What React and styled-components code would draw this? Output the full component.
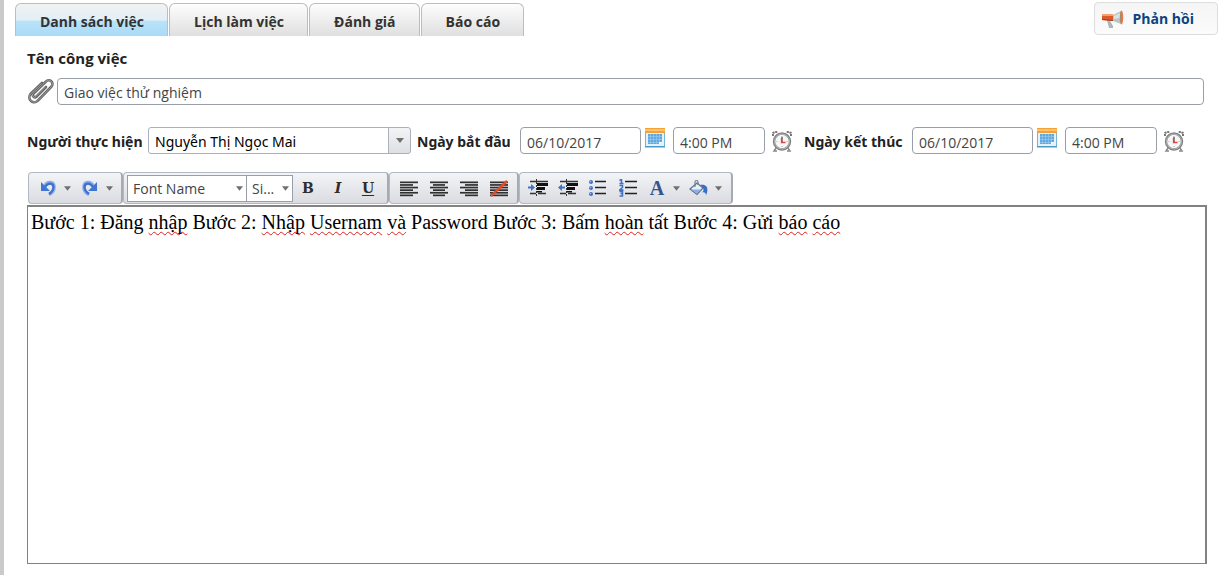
import React from "react";
import styled, { createGlobalStyle, css } from "styled-components";

const ui = `"Open Sans", "Noto Sans", sans-serif`;

const GlobalStyle = createGlobalStyle`
  *, *::before, *::after { box-sizing: border-box; }
  body { margin: 0; background: #fff; font-family: ${ui}; font-size: 14px; color: #222; }
  button, input, select { font: inherit; color: inherit; margin: 0; }
`;

const Page = styled.div`
  display: flex;
  flex-direction: column;
  min-height: 100vh;
  padding: 2px 11px 11px;
  border-left: 4px solid #cbcaca;
`;

const Header = styled.header`
  display: flex;
  justify-content: space-between;
  align-items: flex-start;
`;

const TabBar = styled.nav`
  display: flex;
  gap: 1px;
  padding-top: 1px;
`;

const Tab = styled.button`
  height: 33px;
  padding: 3px 23px 0 24px;
  border: 1px solid #bdbdbd;
  border-bottom: 0;
  border-radius: 6px 6px 0 0;
  font-weight: 700;
  line-height: 20px;
  color: #333;
  white-space: nowrap;
  background: ${(p) =>
    p.$active
      ? "linear-gradient(#f1f2f3 0%, #e2eff5 50%, #b9e3fa 54%, #a9daf7 100%)"
      : "linear-gradient(#fdfdfd, #dfdfdf)"};
`;

const Feedback = styled.button`
  display: flex;
  align-items: center;
  gap: 9px;
  height: 33px;
  padding: 0 23px 0 7px;
  border: 1px solid #ddd;
  border-radius: 4px;
  background: linear-gradient(#f5f5f5, #fbfbfb);
  color: #0b4382;
  font-weight: 700;
  line-height: 20px;
`;

const Form = styled.main`
  flex: 1;
  display: flex;
  flex-direction: column;
  padding: 12px 11px 0 12px;
`;

const Title = styled.label`
  font-size: 15px;
  font-weight: 700;
  line-height: 20px;
`;

const Label = styled.label`
  min-width: ${(p) => p.$width};
  padding-top: 2px;
  font-family: "Noto Sans", sans-serif;
  font-weight: 700;
  line-height: 20px;
  white-space: nowrap;
`;

const TextBox = styled.input`
  height: 27px;
  width: ${(p) => p.$width || "100%"};
  padding: 3px 6px 0;
  border: 1px solid #999ea8;
  border-radius: 4px;
  background: #fff;
  color: #444;
`;

const NameRow = styled.div`
  display: flex;
  align-items: center;
  gap: 2px;
  margin-top: 9px;
  padding-right: 3px;
`;

const IconButton = styled.button`
  display: flex;
  flex: none;
  padding: 0;
  border: 0;
  background: none;
`;

const FieldRow = styled.div`
  display: flex;
  align-items: center;
  margin-top: 22px;
  gap: 6px;
`;

const Field = styled.div`
  display: flex;
  align-items: center;
  gap: 4px;
`;

const DateField = styled(Field)`
  padding-right: 5px;
`;

const CalendarButton = styled(IconButton)`
  align-self: flex-start;
  padding-top: 1px;
  margin-right: 4px;
`;

const ClockButton = styled(IconButton)`
  margin-left: 2px;
`;

const SelectWrap = styled.span`
  display: grid;
  grid-template-columns: 1fr ${(p) => (p.$boxed ? "22px" : "16px")};
  align-items: center;
  width: ${(p) => p.$width};
  svg {
    grid-area: 1 / 2;
    justify-self: center;
    pointer-events: none;
  }
`;

const Select = styled.select`
  grid-area: 1 / 1 / 2 / 3;
  height: 27px;
  width: 100%;
  padding: 0 16px 0 5px;
  appearance: none;
  border: 1px solid #999ea8;
  background: #fff;
  color: #444;
  ${(p) =>
    p.$boxed &&
    css`
      padding: 2px 22px 0 6px;
      border-color: #abb0ba;
      border-radius: 3px;
      font-family: "Noto Sans", sans-serif;
      color: #000;
      background: linear-gradient(#abb0ba, #abb0ba) right 21px top / 1px 100% no-repeat,
        linear-gradient(#f3f4f6, #dddfe3) right top / 21px 100% no-repeat, #fff;
    `}
`;

const Toolbar = styled.div`
  display: flex;
  margin: 18px 0 1px 1px;
`;

const Group = styled.div`
  display: flex;
  align-items: center;
  height: 32px;
  padding: 0 ${(p) => p.$end || "4px"} 0 ${(p) => p.$start || "4px"};
  border: 1px solid #b3b9c2;
  border-right: 2px solid #a5abb4;
  border-radius: 4px;
  background: linear-gradient(#f3f4f6, #dadce1);
  ${SelectWrap} + ${SelectWrap} { margin-left: -1px; }
`;

const Tool = styled.button`
  display: flex;
  align-items: center;
  justify-content: center;
  width: ${(p) => (p.$split ? "28px" : "30px")};
  height: 26px;
  padding: 0;
  border: 0;
  background: none;
`;

const ToolArrow = styled(Tool)`
  width: 10px;
  margin-right: 4px;
`;

const Glyph = styled.span`
  font-family: "DejaVu Serif", serif;
  font-size: 14px;
  line-height: 20px;
  font-weight: 700;
  color: #2e2e2e;
  font-style: ${(p) => (p.$italic ? "italic" : "normal")};
  text-decoration: ${(p) => (p.$underline ? "underline" : "none")};
  text-underline-offset: 2px;
`;

const ColorGlyph = styled(Glyph)`
  font-family: "Liberation Serif", serif;
  font-size: 20px;
  color: #31558f;
`;

const Editor = styled.div`
  flex: 1;
  min-height: 120px;
  padding: 4px 3px;
  border: 1px solid #828282;
  border-top-width: 2px;
  border-right-width: 2px;
  outline: 0;
  font-family: "Liberation Serif", serif;
  font-size: 20px;
  line-height: 23px;
  color: #000;
`;

const Misspelled = styled.span`
  text-decoration: underline wavy #e02020 1px;
  text-underline-offset: 2px;
  text-decoration-skip-ink: none;
`;

const Caret = ({ w = 8 }) => (
  <svg width={w} height="5" viewBox="0 0 8 5" aria-hidden="true">
    <path d="M0 0h8L4 5z" fill="#6f6f6f" />
  </svg>
);

const Megaphone = () => (
  <svg width="22" height="18" viewBox="0 0 22 18" aria-hidden="true">
    <path d="M5 10l3 1 3 5v2H7z" fill="#a9b6b9" />
    <path d="M11 5l8-4v13l-8-3z" fill="#b7c3c4" />
    <path d="M12 6l6-3v5l-6 1z" fill="#dbe2e1" />
    <path d="M0 4h11v7L0 10z" fill="#dc5a28" />
    <path d="M0 4h11v2H0z" fill="#f3a071" />
    <path d="M0 9l11 1v1L0 10z" fill="#963d20" />
    <ellipse cx="19.500" cy="7.500" rx="1.700" ry="7" fill="#e77b45" />
    <ellipse cx="19" cy="7.500" rx=".8" ry="5" fill="#8b928f" />
  </svg>
);

const Paperclip = () => (
  <svg width="28" height="28" viewBox="0 0 28 28" fill="none" strokeLinecap="round" aria-hidden="true">
    <path d="M19 10L9.500 19.500a2 2 0 0 1-3-3L19 4.500a3.600 3.600 0 0 1 5.500 5L11 23.500a4.800 4.800 0 0 1-7.500-6.500L15 6" stroke="#656565" strokeWidth="2.600" />
    <path d="M18.500 10L9 19.500a2 2 0 0 1-3-3L19 4.500a3.600 3.600 0 0 1 5.500 5L11 23.500a4.800 4.800 0 0 1-7.500-6.500L14.500 6.500" stroke="#aaa" strokeWidth=".8" />
  </svg>
);

const Calendar = () => (
  <svg width="20" height="20" viewBox="0 0 20 20" aria-hidden="true">
    <rect x=".5" y=".5" width="19" height="18" fill="#e5f2fa" stroke="#77b3d5" />
    <path d="M0 0h20v5H0z" fill="#f4a137" />
    <path d="M0 1h20v2H0z" fill="#ffc26b" />
    <path d="M3 6h14v8h-3v2H3z" fill="#60a8df" />
    <path d="M3 8.500h14M3 11.500h14M3 14.500h11M5.500 6v10M8.500 6v10M11.500 6v10M14.500 6v8" stroke="#9accee" strokeWidth=".6" />
    <path d="M14 14h3l-3 2z" fill="#fff" />
    <path d="M0 18h20v1.500H0z" fill="#4b9ac7" />
  </svg>
);

const Clock = () => (
  <svg width="22" height="22" viewBox="0 0 22 22" fill="none" aria-hidden="true">
    <path d="M2 6V3l2-1h3M20 6V3l-2-1h-3" stroke="#777" strokeWidth="2" strokeDasharray="2 .7" />
    <path d="M5 18l-2 3h3M17 18l2 3h-3M5 5l2 2M17 5l-2 2" stroke="#888" strokeWidth="1.500" />
    <circle cx="11" cy="11.500" r="8" fill="#f7f7f7" stroke="#808080" strokeWidth="2.400" />
    <circle cx="11" cy="11.500" r="7.500" stroke="#c4c4c4" strokeWidth=".8" />
    <path d="M11 7v5" stroke="#666" strokeWidth="1.500" />
    <path d="M10.500 8v4.500h4" stroke="#df4547" strokeWidth="1.300" />
    <path d="M11 6v1M11 16v1M5.500 11.500h1M15.500 11.500h1" stroke="#aaa" />
  </svg>
);

const Undo = ({ flip }) => (
  <svg width="16" height="16" viewBox="0 0 16 16" aria-hidden="true">
    <g transform={flip ? "matrix(-1 0 0 1 16 0)" : undefined}>
      <path d="M5 6c2-5 9-4.500 9 1 0 3.500-1.500 6-5 7.500" fill="none" stroke="#8dadeb" strokeWidth="3.600" />
      <path d="M5 7c3-5 8.500-4 8.500 0 0 3-1.500 5-4.500 7" fill="none" stroke="#3c70cc" strokeWidth="2.200" />
      <path d="M1 2v9h9L7 8 5 6z" fill="#4175d2" />
    </g>
  </svg>
);

const alignRows = {
  left: [[0, 18], [0, 13], [0, 18], [0, 13], [0, 18], [0, 13]],
  center: [[0, 18], [3, 12], [0, 18], [3, 12], [0, 18], [3, 12]],
  right: [[0, 18], [5, 13], [0, 18], [5, 13], [0, 18], [5, 13]],
  none: [[0, 18], [0, 18], [0, 18], [0, 18], [0, 18], [0, 18]],
};

const Align = ({ kind }) => (
  <svg width="18" height="17" viewBox="0 0 18 17" aria-hidden="true">
    {alignRows[kind].map(([x, w], i) => (
      <rect key={i} x={x} y={1.5 + i * 2.6} width={w} height="1.700" fill="#303030" />
    ))}
    {kind === "none" && <path d="M1 16L17 1" stroke="#e34a27" strokeWidth="2.400" />}
  </svg>
);

const Indent = ({ out }) => (
  <svg width="20" height="18" viewBox="0 0 20 18" aria-hidden="true">
    <path d="M2 2.500h18M2 14.500h6M10 14.500h8" stroke="#333" strokeWidth="1.300" />
    <path d="M9 4h11v3H9zM9 8h8v3H9zM9 12h5v1.500H9z" fill="#111" />
    <path d="M8.500 0v18" stroke="#333" strokeDasharray="2 1" />
    <path d={out ? "M0 8.500l4-3.500v2.500h3v2H4V12z" : "M7 8.500L3 5v2.500H0v2h3V12z"} fill="#3f72cb" />
  </svg>
);

const Bullets = () => (
  <svg width="18" height="18" viewBox="0 0 18 18" aria-hidden="true">
    <path d="M6 2.500h11M6 8.500h11M6 14.500h11" stroke="#222" strokeWidth="1.500" />
    {[3, 9, 15].map((y) => (
      <g key={y}>
        <circle cx="2" cy={y} r="2" fill="#426fc0" />
        <circle cx="1.500" cy={y - 0.5} r=".7" fill="#a9c4f2" />
      </g>
    ))}
  </svg>
);

const Numbers = () => (
  <svg width="18" height="18" viewBox="0 0 18 18" fill="none" aria-hidden="true">
    <path d="M6 2.500h12M6 8.500h12M6 14.500h12" stroke="#222" strokeWidth="1.500" />
    <path d="M.5 1.500L2.500.5v4M.5 4.500h4M.5 6.500h3v2l-3 2.500h4M.5 12.500h3v4.500h-3M1.500 14.500h2" stroke="#416fc2" strokeWidth="1.500" />
  </svg>
);

const Bucket = () => (
  <svg width="20" height="18" viewBox="0 0 20 18" fill="none" aria-hidden="true">
    <path d="M8 4l6 5-6 6.500L1 10z" fill="#e8eef6" stroke="#587194" strokeWidth="1.200" />
    <path d="M2.500 10.500h10L8 14.500z" fill="#8bb0e0" />
    <path d="M6 8V3c0-2 3-2 3 0v3" stroke="#747f8c" strokeWidth="1.200" />
    <path d="M11 6c6-1 9.500 2 6 10.500 0-3-2-4-4-3 2.500-2 2-5-2-7.500z" fill="#386fc4" />
  </svg>
);

const SplitTool = ({ label, children }) => (
  <>
    <Tool type="button" $split aria-label={label}>{children}</Tool>
    <ToolArrow type="button" aria-label={`${label} options`}><Caret w={7} /></ToolArrow>
  </>
);

const Schedule = ({ id, label, labelWidth }) => (
  <DateField>
    <Label htmlFor={id} $width={labelWidth}>{label}</Label>
    <TextBox id={id} $width="121px" defaultValue="06/10/2017" />
    <CalendarButton type="button" aria-label="Calendar"><Calendar /></CalendarButton>
    <TextBox $width="92px" defaultValue="4:00 PM" aria-label={`${label} time`} />
    <ClockButton type="button" aria-label="Clock"><Clock /></ClockButton>
  </DateField>
);

const tabs = ["Danh sách việc", "Lịch làm việc", "Đánh giá", "Báo cáo"];

export default function App() {
  return (
    <>
      <GlobalStyle />
      <Page>
        <Header>
          <TabBar>
            {tabs.map((t, i) => (
              <Tab key={t} type="button" $active={i === 0}>{t}</Tab>
            ))}
          </TabBar>
          <Feedback type="button"><Megaphone />Phản hồi</Feedback>
        </Header>
        <Form>
          <Title htmlFor="task">Tên công việc</Title>
          <NameRow>
            <IconButton type="button" aria-label="Attach"><Paperclip /></IconButton>
            <TextBox id="task" defaultValue="Giao việc thử nghiệm" />
          </NameRow>
          <FieldRow>
            <Field>
              <Label htmlFor="assignee" $width="117px">Người thực hiện</Label>
              <SelectWrap $boxed $width="263px">
                <Select id="assignee" $boxed><option>Nguyễn Thị Ngọc Mai</option></Select>
                <Caret w={10} />
              </SelectWrap>
            </Field>
            <Schedule id="start" label="Ngày bắt đầu" labelWidth="99px" />
            <Schedule id="end" label="Ngày kết thúc" labelWidth="104px" />
          </FieldRow>
          <Toolbar role="toolbar">
            <Group $start="5px" $end="3px">
              <SplitTool label="Undo"><Undo /></SplitTool>
              <SplitTool label="Redo"><Undo flip /></SplitTool>
            </Group>
            <Group $start="3px">
              <SelectWrap $width="120px">
                <Select aria-label="Font name"><option>Font Name</option></Select>
                <Caret w={7} />
              </SelectWrap>
              <SelectWrap $width="47px">
                <Select aria-label="Font size"><option>Si...</option></Select>
                <Caret w={7} />
              </SelectWrap>
              <Tool type="button" aria-label="Bold"><Glyph>B</Glyph></Tool>
              <Tool type="button" aria-label="Italic"><Glyph $italic>I</Glyph></Tool>
              <Tool type="button" aria-label="Underline"><Glyph $underline>U</Glyph></Tool>
            </Group>
            <Group $end="3px">
              {["left", "center", "right", "none"].map((k) => (
                <Tool key={k} type="button" aria-label={`Align ${k}`}><Align kind={k} /></Tool>
              ))}
            </Group>
            <Group $start="3px">
              <Tool type="button" aria-label="Indent"><Indent /></Tool>
              <Tool type="button" aria-label="Outdent"><Indent out /></Tool>
              <Tool type="button" aria-label="Bullets"><Bullets /></Tool>
              <Tool type="button" aria-label="Numbering"><Numbers /></Tool>
              <SplitTool label="Text color"><ColorGlyph>A</ColorGlyph></SplitTool>
              <SplitTool label="Fill color"><Bucket /></SplitTool>
            </Group>
          </Toolbar>
          <Editor contentEditable suppressContentEditableWarning role="textbox" aria-label="Nội dung" spellCheck={false}>
            Bước 1: Đăng <Misspelled>nhập</Misspelled> Bước 2: <Misspelled>Nhập</Misspelled>{" "}
            <Misspelled>Usernam</Misspelled> <Misspelled>và</Misspelled> Password Bước 3: Bấm{" "}
            <Misspelled>hoàn</Misspelled> tất Bước 4: Gửi <Misspelled>báo</Misspelled>{" "}
            <Misspelled>cáo</Misspelled>
          </Editor>
        </Form>
      </Page>
    </>
  );
}
